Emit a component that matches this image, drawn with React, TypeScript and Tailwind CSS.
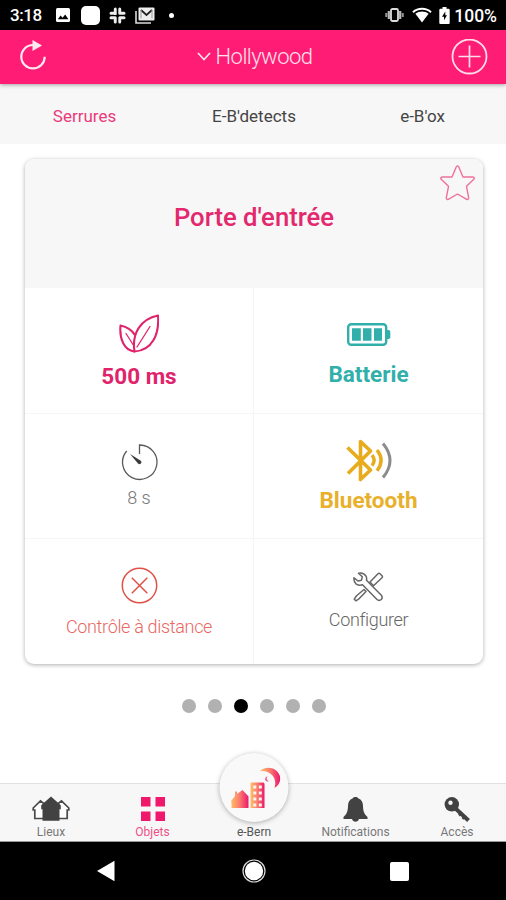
import type { ReactNode } from "react";

function StatusBar() {
  return (
    <div className="flex h-[30px] items-center bg-black pl-[10px] pr-[9px] text-white">
      <span className="w-[46px] pt-[1px] text-[17px] font-medium leading-none tracking-[-0.4px]">3:18</span>
      <svg width="14" height="14" viewBox="0 0 14 14">
        <rect width="14" height="14" rx="1.5" fill="#fff" />
        <path d="M1.8 11.2 4.6 7.5l2 2.3 2.6-3.4 3.2 4.8z" fill="#000" />
      </svg>
      <div className="ml-[11px] size-[19px] rounded-[5px] bg-white" />
      <svg className="ml-[9px]" width="17" height="17" viewBox="0 0 17 17" fill="none" stroke="#eee" strokeWidth="3" strokeLinecap="round">
        <path d="M6.3 2v5M2 6.3h4.3M10.7 2v4.3M10.7 6.3H15M2 10.7h4.3M6.3 10.7V15M10.7 10.7V15M10.7 10.7H15" />
        <path d="M8.5 0v17M0 8.5h17" stroke="#000" strokeWidth="1.2" />
      </svg>
      <svg className="ml-[9px]" width="20" height="17" viewBox="0 0 20 17">
        <path d="M1 4v12h15" fill="none" stroke="#ddd" strokeWidth="1.6" />
        <rect x="3.5" y="0.5" width="16" height="13" rx="1" fill="#eee" />
        <path d="m6 3 5.500 5L17 3" fill="none" stroke="#222" strokeWidth="1.700" />
        <path d="M6 3v8.500M17 3v8.500" fill="none" stroke="#999" strokeWidth="1" />
      </svg>
      <div className="ml-[14px] size-[5px] rounded-full bg-white" />
      <svg className="ml-auto" width="19" height="14" viewBox="0 0 19 14">
        <rect x="6" y="1" width="7" height="12" rx="1.5" fill="none" stroke="#ddd" strokeWidth="1.8" />
        <path d="M3.8 3v8M15.2 3v8" stroke="#bbb" strokeWidth="2.2" />
        <path d="M1.300 5v4M17.700 5v4" stroke="#999" strokeWidth="2" />
      </svg>
      <svg className="ml-[8px]" width="20" height="16" viewBox="0 0 20 16">
        <path d="M1 5.2C6 .6 14 .6 19 5.2" fill="none" stroke="#fff" strokeWidth="2" />
        <path d="M3.4 6.8c4-3.2 9.200-3.200 13.200 0L10 15.500z" fill="#fff" />
      </svg>
      <svg className="ml-[7px]" width="11" height="17" viewBox="0 0 11 17">
        <path d="M3.500 0h4v1.700h2a1.200 1.200 0 0 1 1.200 1.200v12.700A1.200 1.200 0 0 1 9.500 17h-8A1.200 1.200 0 0 1 .3 15.700V2.900a1.200 1.200 0 0 1 1.200-1.200h2z" fill="#fff" />
        <path d="M6.300 4.500 3 9.700h2v3.500l3-5H6.300z" fill="#000" />
      </svg>
      <span className="ml-[4px] pt-[3px] text-[17.5px] font-medium leading-none">100%</span>
    </div>
  );
}

function Header() {
  return (
    <header className="relative z-10 flex h-[54px] items-center justify-between bg-[#ff1c74] pl-[20px] pr-[18px] text-[#ffe3ee] shadow-[0_1px_4px_rgba(0,0,0,0.35)]">
      <svg className="mb-[4px]" width="27" height="30" viewBox="0 0 27 30">
        <path d="M13 5A11.700 11.700 0 1 0 24.700 16.700" fill="none" stroke="#ffe8f0" strokeWidth="2.200" />
        <path d="M12.500 0v11l9.500-5.400z" fill="#ffe8f0" />
      </svg>
      <div className="ml-[11px] flex items-center gap-[5px]">
        <svg className="mb-[2px]" width="14" height="9" viewBox="0 0 14 9" fill="none" stroke="#ffe3ee" strokeWidth="1.700">
          <path d="m1 1 6 6.500L13 1" />
        </svg>
        <span className="text-[22px] font-light leading-none tracking-[-0.550px]">Hollywood</span>
      </div>
      <svg width="37" height="37" viewBox="0 0 37 37" fill="none" stroke="#ffdce9">
        <circle cx="18.500" cy="17.500" r="17" strokeWidth="1.800" />
        <path d="M18.500 6.500v22M7.500 17.500h22" strokeWidth="1.700" />
      </svg>
    </header>
  );
}

function Tabs() {
  return (
    <nav className="grid h-[60px] grid-cols-[169px_170px_167px] items-center bg-[#f7f7f7] pt-[5px] text-center text-[17px] leading-none text-[#444]">
      <span className="text-[#ea3a7c]">Serrures</span>
      <span>E-B'detects</span>
      <span>e-B'ox</span>
    </nav>
  );
}

function Cell({ icon, label, className }: { icon: ReactNode; label: string; className: string }) {
  return (
    <div className={`flex flex-col items-center border-[#f5f5f5] leading-none ${className}`}>
      {icon}
      <span>{label}</span>
    </div>
  );
}

function LeavesIcon() {
  return (
    <svg width="40" height="40" viewBox="0 0 40 40" fill="none" stroke="#e0246b" strokeWidth="2.100" strokeLinejoin="round" strokeLinecap="round">
      <path d="M15.500 37.500C12.500 19 22 5 39 1.500c1.500 19-6 35-23.500 36z" />
      <path d="M15.200 37.500C5 36 .3 25 1.500 11.500 8 13 12.500 15.500 15.500 20.500" />
      <path d="M18 33 31 12.500M7 19.500l7 11" strokeWidth="1.300" />
    </svg>
  );
}

function BatteryIcon() {
  return (
    <svg width="44" height="23" viewBox="0 0 44 23" fill="#31afab">
      <rect x="1.200" y="1.200" width="38" height="20.500" rx="3" fill="none" stroke="#31afab" strokeWidth="2.400" />
      <path d="M40 7h1.500q1.800 0 1.800 1.800v5.400q0 1.800-1.800 1.800H40z" />
      <path d="M5 5.200h8.800v12.500H5zM16 5.200h8.500v12.500H16zM27 5.200h8v12.500h-8z" />
    </svg>
  );
}

function TimerIcon() {
  return (
    <svg width="38" height="38" viewBox="0 0 38 38" fill="none" stroke="#5a5a5a" strokeWidth="1.300">
      <path d="M19.500 11V2A17.200 17.200 0 1 1 6.700 8" />
      <path d="M10 11 20.800 17.700a2 2 0 0 1-2.800 2.900z" fill="#3c3c3c" stroke="none" />
    </svg>
  );
}

function BluetoothIcon() {
  return (
    <svg width="46" height="43" viewBox="0 0 46 43" fill="none" stroke="#e8ab1b" strokeWidth="3.600" strokeLinejoin="round">
      <path d="M1.500 8.500 24.500 31 14.500 40.500v-38l10 9.500L2 34.500" />
      <path d="M26 16.200q4.400 5.200 0 10.400M31 11q8.200 10.400 0 20.800" strokeWidth="3.400" />
      <path d="M37 4.500q14 17 0 34" stroke="#8c8c8c" strokeWidth="3" />
    </svg>
  );
}

function CrossIcon() {
  return (
    <svg width="37" height="37" viewBox="0 0 37 37" fill="none" stroke="#df5147">
      <circle cx="18.500" cy="18.500" r="17.200" strokeWidth="1.500" />
      <path d="m10.800 10.800 15.500 15.500m0-15.500L10.800 26.300" strokeWidth="1.500" />
    </svg>
  );
}

function ToolsIcon() {
  return (
    <svg width="31" height="30" viewBox="0 0 31 30" fill="#fff" stroke="#666" strokeWidth="1.500" strokeLinejoin="round">
      <path d="m17 10 8-8.300q1-.9 2 0l2 2q.9 1 0 2l-8.500 8zM11 17.500 3.300 24l-2 3.200 1.500 1.600 3.200-2 7-7.300z" />
      <path d="M5.500 1.200q5-1.200 7.500 3 1 2 .5 4l14.800 15q1.800 2.200 0 4.300-2.200 1.800-4.300 0L9.500 12.800q-3.500 1.200-6.500-1-2.500-2-2-6l4 3.200 3.500-.8.800-3.500z" />
    </svg>
  );
}

function StarIcon() {
  return (
    <svg className="absolute right-[8px] top-[6px]" width="35" height="36" viewBox="0 0 35 36" fill="none" stroke="#ee719d" strokeWidth="1.400" strokeLinejoin="round">
      <path d="M16.200 2q1.300-2.200 2.600 0l4.200 10h9.800q2.200.4 1 2.300l-7.300 7 2.200 11.500q-.1 2.200-2 1.500l-9.200-5.300-9.200 5.300q-1.900.7-2-1.500l2.200-11.500-7.300-7q-1.200-1.900 1-2.300H12z" />
    </svg>
  );
}

function LockCard() {
  return (
    <section className="ml-[25px] mt-[15px] h-[505px] w-[458px] overflow-hidden rounded-[9px] bg-white shadow-[0_1px_4px_rgba(0,0,0,0.32)]">
      <div className="relative flex h-[129px] justify-center bg-[#f7f7f7] pt-[46px]">
        <h1 className="text-[25.7px] font-medium leading-none text-[#e3286e]">Porte d'entrée</h1>
        <StarIcon />
      </div>
      <div className="grid grid-cols-2 grid-rows-[126px_125px_125px]">
        <Cell icon={<LeavesIcon />} label="500 ms" className="gap-[11px] border-b border-r pt-[26px] text-[22.5px] font-bold text-[#e0246b]" />
        <Cell icon={<BatteryIcon />} label="Batterie" className="gap-[17px] border-b pt-[35px] text-[22.5px] font-bold text-[#31afab]" />
        <Cell icon={<TimerIcon />} label="8 s" className="gap-[8px] border-b border-r pt-[29px] text-[18px] font-light text-[#777]" />
        <Cell icon={<BluetoothIcon />} label="Bluetooth" className="gap-[7px] border-b pt-[25px] text-[22.5px] font-bold text-[#e8b02b]" />
        <Cell icon={<CrossIcon />} label="Contrôle à distance" className="gap-[14px] border-r pt-[28px] text-[18px] font-light tracking-[-0.320px] text-[#e8675f]" />
        <Cell icon={<ToolsIcon />} label="Configurer" className="gap-[9px] pt-[33px] text-[18px] font-light tracking-[-0.350px] text-[#666]" />
      </div>
    </section>
  );
}

function Dots() {
  return (
    <div className="mt-[35px] flex justify-center gap-[12px] pl-[2px]">
      {[0, 1, 2, 3, 4, 5].map((i) => (
        <span key={i} className={`size-[14px] rounded-full ${i === 2 ? "bg-black" : "bg-[#b1b1b1]"}`} />
      ))}
    </div>
  );
}

function HousesIcon() {
  return (
    <svg width="38" height="26" viewBox="0 0 38 26">
      <path d="M13 8.500 8.500 4.800 1.200 12v2h1.600v8.500H14M25 8.500l4.500-3.700 7.300 7.200v2h-1.600v8.500H24" fill="#fff" stroke="#4a4a4a" strokeWidth="1.700" />
      <path d="m19 .500 9.800 8.800v4h-1.300v11.500H10.500V13.300H9.200v-4z" fill="#424242" />
    </svg>
  );
}

function ObjectsIcon() {
  return (
    <svg width="24" height="24" viewBox="0 0 24 24" fill="#f0186a">
      <path d="M0 0h9.500v9.500H0zM14.500 0H24v9.500h-9.500zM0 14.500h9.500V24H0zM14.500 14.500H24V24h-9.500z" />
    </svg>
  );
}

function BellIcon() {
  return (
    <svg width="25" height="25" viewBox="0 0 25 25" fill="#424242">
      <path d="M12.500 0c1.500 0 2.700.7 3 1.600 3 1.200 4.400 3.500 4.500 7.400.2 5.500 1 7.700 4.500 11v2H16c-.5 1.700-1.900 2.700-3.500 2.700S9.500 23.700 9 22H.5v-2C4 16.700 4.800 14.500 5 9c.1-3.900 1.500-6.200 4.500-7.400.3-.9 1.500-1.600 3-1.600z" />
    </svg>
  );
}

function KeyIcon() {
  return (
    <svg width="26" height="25" viewBox="0 0 26 25">
      <path d="M11 11 24.500 23.500" stroke="#424242" strokeWidth="4" />
      <path d="m15 18.500 3-3M18.500 21.800l3-3" stroke="#424242" strokeWidth="2.600" />
      <circle cx="7.800" cy="7.300" r="7.200" fill="#424242" />
      <circle cx="6.500" cy="5.800" r="2.200" fill="#f7f7f7" />
    </svg>
  );
}

function EBernIcon() {
  return (
    <svg className="ml-[2px]" width="50" height="42" viewBox="0 0 50 42">
      <defs>
        <linearGradient id="sunset" x1="0" x2="1" y1="0" y2="0">
          <stop offset="0" stopColor="#ffc06a" />
          <stop offset="0.500" stopColor="#fa7a6d" />
          <stop offset="1" stopColor="#ed176c" />
        </linearGradient>
      </defs>
      <path d="M.5 34 4.500 29v-4.500h2V27l5.500-4 6 6.500V41H1v-5z" fill="url(#sunset)" />
      <path d="M20 16.500q0-1 1-1h11.500q1.500 0 1.500 1.500v24H20z" fill="url(#sunset)" />
      <path d="M22.800 18.500h3v3h-3zM28.300 18.500h3v3h-3zM22.800 24.500h3v3h-3zM28.300 24.500h3v3h-3zM22.800 30.500h3v3h-3zM28.300 30.500h3v3h-3zM22.800 36.500h3v3h-3zM28.300 36.500h3v3h-3z" fill="#fff4ef" />
      <path d="M29.500 4C36-2 46 .500 49 8c2 5-.200 10-5 13 1.400-5 .8-9-2-12.500C39.500 5.200 35 3.500 29.500 4z" fill="url(#sunset)" />
      <path d="M37.500 9.200c-2 1.300-1.800 4 1.300 4.800-2.500 1.200-4.700-.2-4.200-2.400.3-1.200 1.400-2.200 2.900-2.400z" fill="#ef5b92" />
    </svg>
  );
}

function NavItem({ icon, label, active }: { icon: ReactNode; label: string; active?: boolean }) {
  return (
    <div className={`flex flex-col items-center text-[12px] leading-none ${active ? "text-[#ee4f89]" : "text-[#777]"}`}>
      <div className="flex h-[42px] items-center pt-[8px]">{icon}</div>
      <span>{label}</span>
    </div>
  );
}

function BottomNav() {
  return (
    <nav className="grid h-[59px] grid-cols-[102px_101px_102px_101px_102px] border-b border-t border-b-[#999] border-t-[#e2e2e2] bg-[#f7f7f7]">
      <NavItem icon={<HousesIcon />} label="Lieux" />
      <NavItem icon={<ObjectsIcon />} label="Objets" active />
      <div className="relative flex flex-col items-center pt-[42px] text-[12px] leading-none text-[#555]">
        <div className="absolute left-1/2 top-[-31px] flex size-[69px] -translate-x-1/2 items-center justify-center rounded-full bg-[#f9f9f9] shadow-[0_1px_5px_rgba(0,0,0,0.3)]">
          <EBernIcon />
        </div>
        <span>e-Bern</span>
      </div>
      <NavItem icon={<BellIcon />} label="Notifications" />
      <NavItem icon={<KeyIcon />} label="Accès" />
    </nav>
  );
}

function SystemBar() {
  return (
    <div className="flex h-[58px] items-center justify-between bg-black pl-[96px] pr-[97px]">
      <svg width="20" height="22" viewBox="0 0 20 22">
        <path d="M1 11 18.500.8v20.400z" fill="#fff" />
      </svg>
      <svg className="ml-[2px]" width="24" height="24" viewBox="0 0 24 24">
        <circle cx="12" cy="12" r="11" fill="none" stroke="#ddd" strokeWidth="1.200" />
        <circle cx="12" cy="12" r="9.200" fill="#fff" />
      </svg>
      <div className="size-[19px] rounded-[2px] bg-white" />
    </div>
  );
}

export default function App() {
  return (
    <div className="flex h-[900px] w-[506px] flex-col overflow-hidden bg-white font-['Roboto',sans-serif]">
      <StatusBar />
      <Header />
      <Tabs />
      <LockCard />
      <Dots />
      <div className="mt-auto">
        <BottomNav />
        <SystemBar />
      </div>
    </div>
  );
}
